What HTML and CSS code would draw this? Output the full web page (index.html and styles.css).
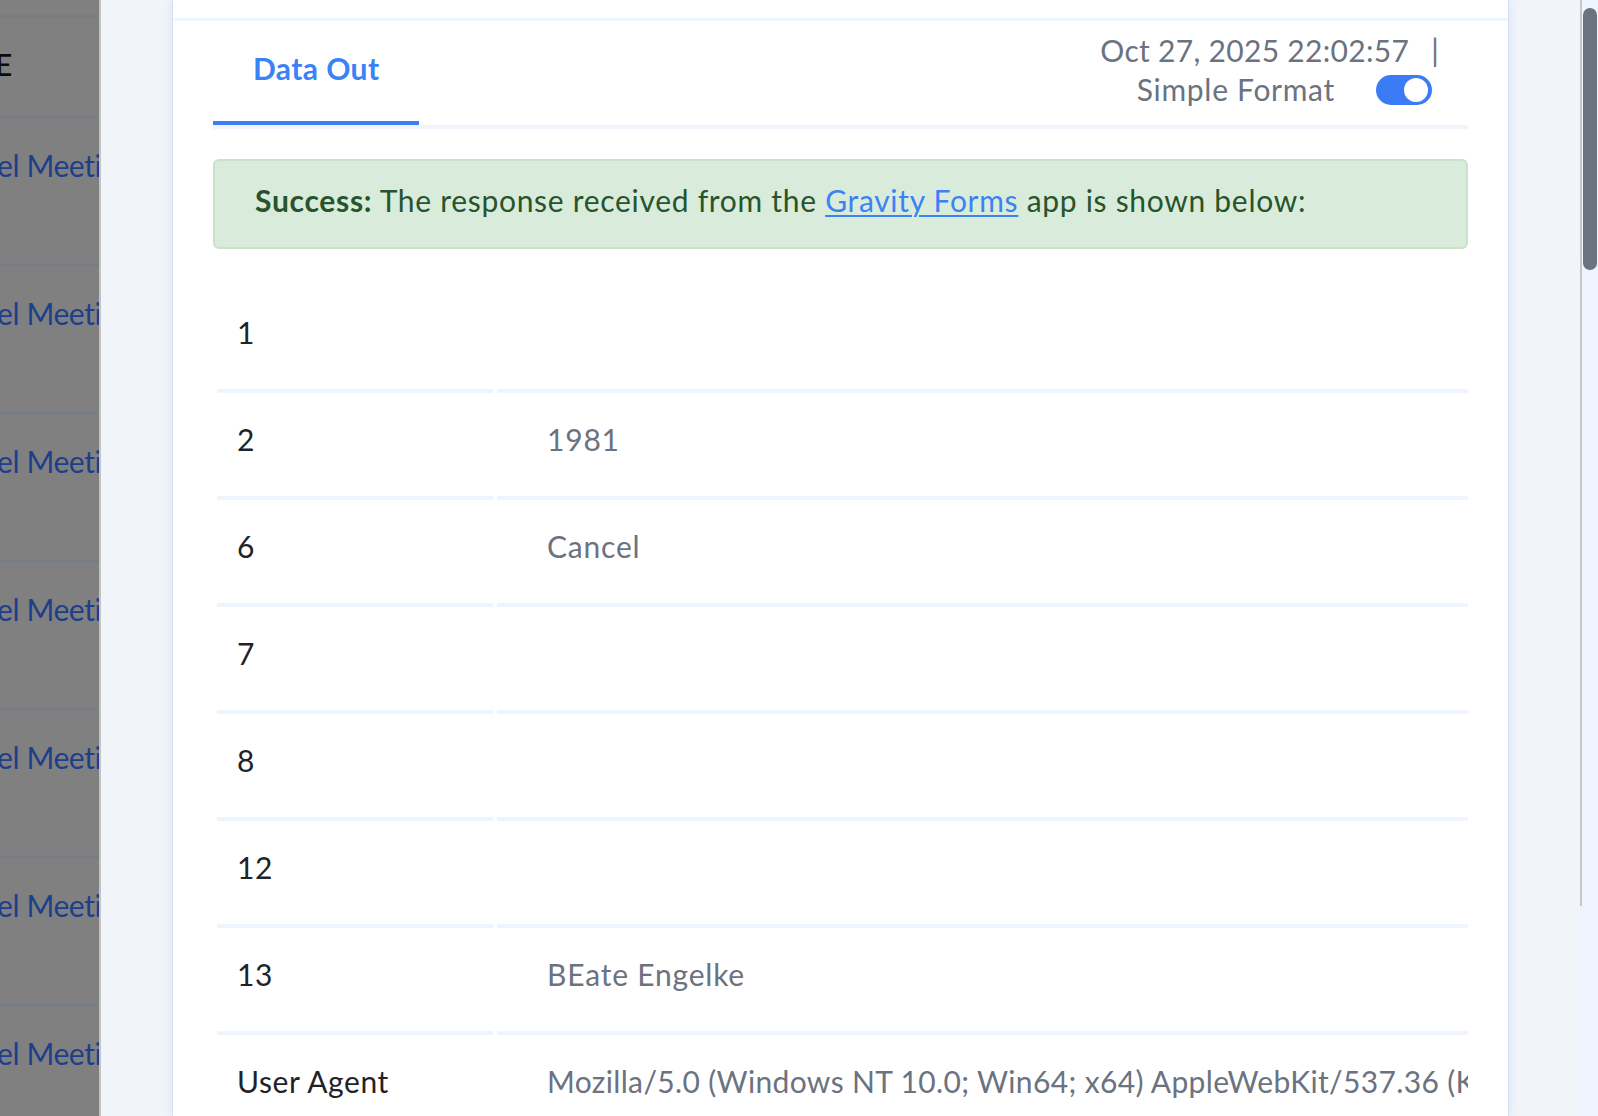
FILE: index.html
```html
<!DOCTYPE html>
<html lang="en">
<head>
<meta charset="utf-8">
<title>Data Out</title>
<link rel="stylesheet" href="styles.css">
</head>
<body>
<div class="page">
  <aside class="backdrop">
    <div class="bd-top"></div>
    <div class="bd-head"><span class="bd-head-text">E</span></div>
    <div class="bd-row"><span class="bd-link">el Meeting</span></div>
    <div class="bd-row"><span class="bd-link">el Meeting</span></div>
    <div class="bd-row"><span class="bd-link">el Meeting</span></div>
    <div class="bd-row"><span class="bd-link">el Meeting</span></div>
    <div class="bd-row"><span class="bd-link">el Meeting</span></div>
    <div class="bd-row"><span class="bd-link">el Meeting</span></div>
    <div class="bd-row"><span class="bd-link">el Meeting</span></div>
  </aside>

  <main class="drawer">
    <section class="card">
      <div class="card-top"></div>
      <div class="card-body">
        <div class="tabs">
          <div class="tab tab-active">Data Out</div>
          <div class="meta">
            <div class="meta-date">Oct 27, 2025 22:02:57<span class="pipe">|</span></div>
            <div class="meta-format">Simple Format<span class="toggle"><span class="knob"></span></span></div>
          </div>
        </div>

        <div class="alert">
          <strong>Success:</strong> The response received from the <a class="alert-link" href="#">Gravity Forms</a> app is shown below:
        </div>

        <table class="kv">
          <tbody>
            <tr><td class="kv-key">1</td><td class="kv-val"></td></tr>
            <tr><td class="kv-key">2</td><td class="kv-val">1981</td></tr>
            <tr><td class="kv-key">6</td><td class="kv-val">Cancel</td></tr>
            <tr><td class="kv-key">7</td><td class="kv-val"></td></tr>
            <tr><td class="kv-key">8</td><td class="kv-val"></td></tr>
            <tr><td class="kv-key">12</td><td class="kv-val"></td></tr>
            <tr><td class="kv-key">13</td><td class="kv-val">BEate Engelke</td></tr>
            <tr><td class="kv-key">User Agent</td><td class="kv-val kv-val-long">Mozilla/5.0 (Windows NT 10.0; Win64; x64) AppleWebKit/537.36 (KHTML, like Gecko) Chrome/141.0.0.0 Safari/537.36</td></tr>
          </tbody>
        </table>
      </div>
    </section>
  </main>

  <div class="scrollbar">
    <div class="scroll-line"></div>
    <div class="scroll-thumb"></div>
  </div>
</div>
</body>
</html>
```

FILE: styles.css
```css
* {
  box-sizing: border-box;
}

html, body {
  margin: 0;
  padding: 0;
}

body {
  font-family: Lato, "Noto Sans", "Liberation Sans", sans-serif;
  font-size: 30px;
  line-height: 36px;
  letter-spacing: 0.6px;
  color: #1f2328;
  background: #f1f5f9;
}

.page {
  display: flex;
  width: 1598px;
  height: 1116px;
  overflow: hidden;
}

/* dimmed page behind the drawer */
.backdrop {
  width: 101px;
  flex: 0 0 101px;
  background: #808080;
  border-right: 2px solid #c3c3c5;
  overflow: hidden;
  white-space: nowrap;
  letter-spacing: -0.4px;
}

.bd-top {
  height: 18px;
  border-bottom: 3px solid #787c83;
}

.bd-head {
  height: 101px;
  border-bottom: 3px solid #787c83;
  display: flex;
  align-items: center;
  padding-bottom: 6px;
}

.bd-head-text {
  color: #0b0b0c;
  font-weight: 500;
  margin-left: -5px;
}

.bd-row {
  height: 148px;
  border-bottom: 3px solid #787c83;
  padding-top: 28px;
}

.bd-link {
  display: block;
  color: #1d3f8a;
  margin-left: -3px;
}

/* drawer */
.drawer {
  flex: 1 1 auto;
  background: #f1f5f9;
  padding: 0 72px 0 72px;
  min-width: 0;
}

.card {
  background: #ffffff;
  height: 100%;
  box-shadow: 0 0 10px rgba(59, 110, 235, 0.18), 0 0 0 1px rgba(120, 150, 235, 0.12);
}

.card-top {
  height: 21px;
  border-bottom: 3px solid #eef5ff;
}

.card-body {
  padding: 0 40px;
}

.tabs {
  display: flex;
  justify-content: space-between;
  align-items: flex-start;
  border-bottom: 4px solid #eef5ff;
}

.tab {
  padding: 29px 40px 35px;
  font-weight: 700;
  letter-spacing: 0.4px;
  color: #3b82f6;
  border-bottom: 4px solid #3b7ff5;
}

.meta {
  display: flex;
  flex-direction: column;
  align-items: flex-end;
  padding-top: 10px;
  margin-right: 29px;
  color: #6b7280;
  line-height: 39px;
}

.meta-date {
  display: flex;
  align-items: center;
  letter-spacing: 0.3px;
}

.pipe {
  margin-left: 22px;
}

.meta-format {
  display: flex;
  align-items: center;
  margin-right: 7px;
  letter-spacing: 0.7px;
}

.toggle {
  display: flex;
  align-items: center;
  justify-content: flex-end;
  width: 56px;
  height: 30px;
  margin-left: 41px;
  padding: 0 4px;
  border-radius: 15px;
  background: #3b7bf6;
}

.knob {
  width: 24px;
  height: 24px;
  border-radius: 50%;
  background: #ffffff;
}

/* success banner */
.alert {
  margin-top: 30px;
  padding: 21px 40px 29px;
  background: #d9ebdb;
  border: 2px solid #c7e3cb;
  border-radius: 6px;
  color: #27542b;
  letter-spacing: 0.7px;
}

.alert strong {
  font-weight: 700;
}

.alert-link {
  color: #3b82f6;
  text-decoration: underline;
  text-underline-offset: 3px;
  text-decoration-thickness: 2px;
}

/* key / value table */
.kv {
  margin-top: 37px;
  width: calc(100% + 4px);
  margin-left: 0;
  margin-right: -4px;
  border-collapse: separate;
  border-spacing: 4px 0;
  table-layout: fixed;
}

.kv td {
  height: 107px;
  padding: 28px 0 39px;
  border-bottom: 4px solid #eef5ff;
  vertical-align: top;
  white-space: nowrap;
  overflow: hidden;
}

.kv-key {
  width: 276px;
  padding-left: 20px !important;
  color: #1f2328;
}

.kv-val {
  padding-left: 50px !important;
  color: #6b7280;
  letter-spacing: 0.8px;
}

.kv-val-long {
  letter-spacing: 0.35px;
}

/* scrollbar */
.scrollbar {
  position: relative;
  width: 18px;
  flex: 0 0 18px;
  background: #eef5ff;
}

.scroll-line {
  width: 2px;
  height: 906px;
  background: #c6c7ca;
}

.scroll-thumb {
  position: absolute;
  left: 3px;
  top: 8px;
  width: 14px;
  height: 262px;
  border-radius: 7px;
  background: #6b7280;
}
```
